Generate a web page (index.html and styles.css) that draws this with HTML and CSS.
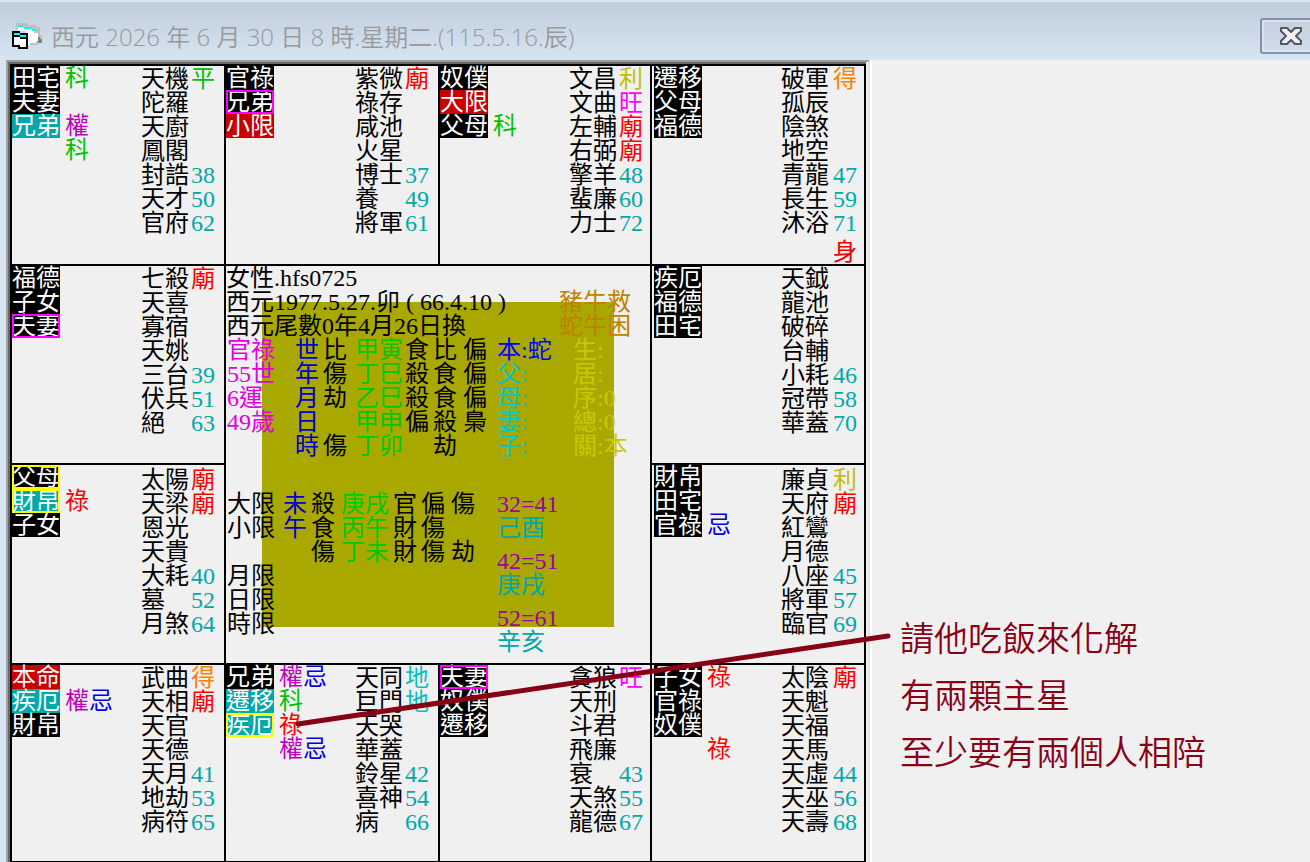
FILE: index.html
```html
<!DOCTYPE html>
<html lang="zh-Hant">
<head>
    <meta charset="UTF-8">
    <meta name="viewport" content="width=device-width, initial-scale=1.0">
    <title>西元 2026 年 6 月 30 日 8 時</title>
    <link rel="stylesheet" href="styles.css">
</head>
<body>
    <header class="titlebar">
        <svg class="app-icon" width="32" height="28" viewBox="0 0 32 28" shape-rendering="crispEdges">
            <path fill="#c0c0c0" d="M4 0h12v2h8v2h4v8h2v8h-4v2H14V6H4z"/>
            <path fill="#fff" d="M6 4h10v2h6v4h4v8h-2v2h-6v2h-4V8H6z"/>
            <path fill="#00ffff" d="M6 2h6v2H6zM12 4h8v2h-8zM20 6h4v2h-4z"/>
            <path fill="#808080" d="M26 14h2v2h2v4h-4z"/>
            <path fill="#000" d="M0 8h8v2h8v16H6v-2H0z"/>
            <path fill="#fff" d="M2 14h6v2h6v8H8v-2H2z"/>
            <path fill="#00ffff" d="M2 10h6v2H2zM8 12h6v2H8z"/>
        </svg>
        <h1 class="title">西元 2026 年 6 月 30 日 8 時.星期二.(115.5.16.辰)</h1>
        <button class="close" type="button" aria-label="關閉">
            <svg width="22" height="18" viewBox="0 0 22 18">
                <path d="M1 1h6l4 4 4-4h6v3l-5 5 5 5v3h-6l-4-4-4 4H1v-3l5-5-5-5z" fill="#f0f0f0" stroke="#525669" stroke-width="2" stroke-linejoin="round"/>
            </svg>
        </button>
    </header>

    <main class="client">
        <div class="frame">
            <div class="chart">
                <section class="cell">
                    <div class="tags">
                        <span class="tag">田宅</span>
                        <span class="tag">夫妻</span>
                        <span class="tag teal">兄弟</span>
                    </div>
                    <div class="marks"><span class="ke">科</span><br><br><span class="quan">權</span><br><span class="ke">科</span></div>
                    <div class="stars">天機<br>陀羅<br>天廚<br>鳳閣<br>封誥<br>天才<br>官府</div>
                    <div class="ages"><span class="ping">平</span><br><br><br><br>38<br>50<br>62</div>
                </section>
                <section class="cell">
                    <div class="tags">
                        <span class="tag">官祿</span>
                        <span class="tag pink-line">兄弟</span>
                        <span class="tag red">小限</span>
                    </div>
                    <div class="marks"></div>
                    <div class="stars">紫微<br>祿存<br>咸池<br>火星<br>博士<br>養<br>將軍</div>
                    <div class="ages"><span class="miao">廟</span><br><br><br><br>37<br>49<br>61</div>
                </section>
                <section class="cell third">
                    <div class="tags">
                        <span class="tag">奴僕</span>
                        <span class="tag red">大限</span>
                        <span class="tag">父母</span>
                    </div>
                    <div class="marks"><br><br><span class="ke">科</span></div>
                    <div class="stars">文昌<br>文曲<br>左輔<br>右弼<br>擎羊<br>蜚廉<br>力士</div>
                    <div class="ages"><span class="li">利</span><br><span class="wang">旺</span><br><span class="miao">廟</span><br><span class="miao">廟</span><br>48<br>60<br>72</div>
                </section>
                <section class="cell east">
                    <div class="tags">
                        <span class="tag">遷移</span>
                        <span class="tag">父母</span>
                        <span class="tag">福德</span>
                    </div>
                    <div class="marks"></div>
                    <div class="stars">破軍<br>孤辰<br>陰煞<br>地空<br>青龍<br>長生<br>沐浴</div>
                    <div class="ages"><span class="de">得</span><br><br><br><br>47<br>59<br>71<div class="body-mark">身</div></div>
                </section>

                <section class="cell">
                    <div class="tags">
                        <span class="tag">福德</span>
                        <span class="tag">子女</span>
                        <span class="tag pink-line">夫妻</span>
                    </div>
                    <div class="marks"></div>
                    <div class="stars">七殺<br>天喜<br>寡宿<br>天姚<br>三台<br>伏兵<br>絕</div>
                    <div class="ages"><span class="miao">廟</span><br><br><br><br>39<br>51<br>63</div>
                </section>

                <section class="center">
                    <div class="intro">
                        <div>女性.hfs0725<br>西元1977.5.27.卯 ( 66.4.10 )<br>西元尾數0年4月26日換</div>
                        <div class="verdict">豬牛救<br>蛇牛困</div>
                    </div>
                    <table class="pillars">
                        <colgroup>
                            <col class="w-luck"><col class="w-one"><col class="w-two"><col class="w-pair"><col class="w-one"><col class="w-god"><col class="w-gap"><col class="w-kin"><col>
                        </colgroup>
                        <tr><td class="luck">官祿</td><td class="blue">世</td><td>比</td><td class="green">甲寅</td><td>食</td><td>比</td><td>偏</td><td class="self">本:蛇</td><td class="info">生:</td></tr>
                        <tr><td class="luck">55世</td><td class="blue">年</td><td>傷</td><td class="green">丁巳</td><td>殺</td><td>食</td><td>偏</td><td class="kin">父:</td><td class="info">居:</td></tr>
                        <tr><td class="luck">6運</td><td class="blue">月</td><td>劫</td><td class="green">乙巳</td><td>殺</td><td>食</td><td>偏</td><td class="kin">母:</td><td class="info">序:0</td></tr>
                        <tr><td class="luck">49歲</td><td class="blue">日</td><td></td><td class="green">甲申</td><td>偏</td><td>殺</td><td>梟</td><td class="kin">妻:</td><td class="info">總:0</td></tr>
                        <tr><td></td><td class="blue">時</td><td>傷</td><td class="green">丁卯</td><td></td><td>劫</td><td></td><td class="kin">子:</td><td class="info">關:本</td></tr>
                    </table>
                    <div class="limits">
                        <table class="limit-table">
                            <colgroup>
                                <col class="w-limit"><col class="w-one"><col class="w-god"><col class="w-pillar"><col class="w-one"><col class="w-god"><col>
                            </colgroup>
                            <tr><td>大限</td><td class="blue">未</td><td>殺</td><td class="green">庚戌</td><td>官</td><td>偏</td><td>傷</td></tr>
                            <tr><td>小限</td><td class="blue">午</td><td>食</td><td class="green">丙午</td><td>財</td><td>傷</td><td></td></tr>
                            <tr><td></td><td></td><td>傷</td><td class="green">丁未</td><td>財</td><td>傷</td><td>劫</td></tr>
                            <tr><td>月限</td><td colspan="6"></td></tr>
                            <tr><td>日限</td><td colspan="6"></td></tr>
                            <tr><td>時限</td><td colspan="6"></td></tr>
                        </table>
                        <div class="decades">
                            <div><span class="years">32=41</span><br>己酉</div>
                            <div><span class="years">42=51</span><br>庚戌</div>
                            <div><span class="years">52=61</span><br>辛亥</div>
                        </div>
                    </div>
                </section>

                <section class="cell east">
                    <div class="tags">
                        <span class="tag">疾厄</span>
                        <span class="tag">福德</span>
                        <span class="tag">田宅</span>
                    </div>
                    <div class="marks"></div>
                    <div class="stars">天鉞<br>龍池<br>破碎<br>台輔<br>小耗<br>冠帶<br>華蓋</div>
                    <div class="ages"><br><br><br><br>46<br>58<br>70</div>
                </section>

                <section class="cell low">
                    <div class="tags">
                        <span class="tag yellow-line">父母</span>
                        <span class="tag teal yellow-line">財帛</span>
                        <span class="tag">子女</span>
                    </div>
                    <div class="marks"><br><span class="lu">祿</span></div>
                    <div class="stars">太陽<br>天梁<br>恩光<br>天貴<br>大耗<br>墓<br>月煞</div>
                    <div class="ages"><span class="miao">廟</span><br><span class="miao">廟</span><br><br><br>40<br>52<br>64</div>
                </section>
                <section class="cell east low">
                    <div class="tags">
                        <span class="tag">財帛</span>
                        <span class="tag">田宅</span>
                        <span class="tag">官祿</span>
                    </div>
                    <div class="marks"><br><br><span class="ji">忌</span></div>
                    <div class="stars">廉貞<br>天府<br>紅鸞<br>月德<br>八座<br>將軍<br>臨官</div>
                    <div class="ages"><span class="li">利</span><br><span class="miao">廟</span><br><br><br>45<br>57<br>69</div>
                </section>

                <section class="cell">
                    <div class="tags">
                        <span class="tag red">本命</span>
                        <span class="tag teal">疾厄</span>
                        <span class="tag">財帛</span>
                    </div>
                    <div class="marks"><br><span class="quan">權</span><span class="ji">忌</span></div>
                    <div class="stars">武曲<br>天相<br>天官<br>天德<br>天月<br>地劫<br>病符</div>
                    <div class="ages"><span class="de">得</span><br><span class="miao">廟</span><br><br><br>41<br>53<br>65</div>
                </section>
                <section class="cell">
                    <div class="tags">
                        <span class="tag">兄弟</span>
                        <span class="tag teal">遷移</span>
                        <span class="tag teal yellow-line">疾厄</span>
                    </div>
                    <div class="marks"><span class="quan">權</span><span class="ji">忌</span><br><span class="ke">科</span><br><span class="lu">祿</span><br><span class="quan">權</span><span class="ji">忌</span></div>
                    <div class="stars">天同<br>巨門<br>天哭<br>華蓋<br>鈴星<br>喜神<br>病</div>
                    <div class="ages"><span class="di">地</span><br><span class="di">地</span><br><br><br>42<br>54<br>66</div>
                </section>
                <section class="cell third">
                    <div class="tags">
                        <span class="tag pink-line">夫妻</span>
                        <span class="tag">奴僕</span>
                        <span class="tag">遷移</span>
                    </div>
                    <div class="marks"></div>
                    <div class="stars">貪狼<br>天刑<br>斗君<br>飛廉<br>衰<br>天煞<br>龍德</div>
                    <div class="ages"><span class="wang">旺</span><br><br><br><br>43<br>55<br>67</div>
                </section>
                <section class="cell east">
                    <div class="tags">
                        <span class="tag">子女</span>
                        <span class="tag">官祿</span>
                        <span class="tag">奴僕</span>
                    </div>
                    <div class="marks"><span class="lu">祿</span><br><br><br><span class="lu">祿</span></div>
                    <div class="stars">太陰<br>天魁<br>天福<br>天馬<br>天虛<br>天巫<br>天壽</div>
                    <div class="ages"><span class="miao">廟</span><br><br><br><br>44<br>56<br>68</div>
                </section>
            </div>
        </div>

        <aside class="notes">
            <p>請他吃飯來化解</p>
            <p>有兩顆主星</p>
            <p>至少要有兩個人相陪</p>
        </aside>

        <!-- pointer from the mark to the note -->
        <svg class="pointer" width="600" height="100" viewBox="0 0 600 100">
            <path d="M6 94L596 6" stroke="#880015" stroke-width="5" stroke-linecap="round"/>
        </svg>
    </main>
</body>
</html>
```
FILE: styles.css
```css
body {
    margin: 0;
    height: 100vh;
    display: flex;
    flex-direction: column;
    overflow: hidden;
    background: #f0f0f0;
    font-family: "Liberation Serif", "Noto Sans CJK TC", serif;
    font-size: 24px;
    line-height: 24px;
    color: #000;
}

/* title bar */
.titlebar {
    display: flex;
    align-items: center;
    flex: none;
    box-sizing: border-box;
    height: 60px;
    padding: 12px 0 0 12px;
    border-top: 2px solid #dce5ee;
    background: linear-gradient(#bfccda, #d7e4f2);
}
.app-icon {
    flex: none;
}
.title {
    flex: 1;
    margin: 0 0 0 7px;
    font: 24px/32px "Open Sans", "Noto Sans CJK TC", sans-serif;
    font-weight: 350;
    color: #999;
    white-space: nowrap;
}
.close {
    display: flex;
    align-items: center;
    justify-content: center;
    width: 62px;
    height: 36px;
    margin: 0 -12px 2px 0;
    padding: 0;
    border: 2px solid #8490ae;
    border-radius: 3px;
    background: linear-gradient(#c3d0de, #d0dcea);
    box-shadow: inset 0 0 0 2px #dae4f0;
}

/* client area */
.client {
    position: relative;
    display: flex;
    flex: 1;
    min-height: 0;
}
.frame {
    flex: none;
    align-self: flex-start;
    margin-left: 6px;
    padding-right: 2px;
    border: 2px solid #a0a0a0;
    border-right-color: #e3e3e3;
    box-shadow: -6px 0 0 #d7e4f2, 2px 0 0 #fff;
}
.chart {
    display: grid;
    grid-template-columns: 212px 212px 210px 212px;
    grid-template-rows: 198px 197px 198px 196px;
    gap: 2px;
    padding: 2px;
    background: #000;
    border: 2px solid #696969;
    border-right: 0;
    border-bottom: 0;
}

/* palace cells */
.cell {
    display: flex;
    padding-right: 9px;
    background: #f0f0f0;
}
.third {
    padding-right: 7px;
}
.east {
    padding: 0 7px 0 2px;
}
.tags {
    width: 48px;
}
.tag {
    display: block;
    height: 24px;
    background: #000;
    color: #fff;
}
.teal {
    background: #00a8a8;
}
.red {
    background: #c80000;
}
.pink-line {
    outline: 2px solid #f0f;
    outline-offset: -2px;
}
.yellow-line {
    outline: 2px solid #ff0;
    outline-offset: -2px;
}
.marks {
    flex: 1;
    margin-left: 5px;
}
.stars,
.ages {
    padding-top: 1px;
}
.low .stars,
.low .ages {
    padding-top: 3px;
}
.stars {
    width: 48px;
}
.ages {
    width: 24px;
    margin-left: 2px;
    color: #00a8a8;
}
.east .ages {
    margin-left: 4px;
}
.body-mark {
    margin-top: 5px;
    color: #f00000;
}

/* marks and brightness */
.ke,
.ping {
    color: #00c000;
}
.quan {
    color: #c000c0;
}
.lu,
.miao {
    color: #f00;
}
.ji {
    color: #0000e0;
}
.li {
    color: #c0c000;
}
.wang {
    color: #f0f;
}
.de {
    color: #ff8000;
}
.di {
    color: #00c0c0;
}

/* center panel */
.center {
    position: relative;
    z-index: 0;
    grid-area: 2 / 2 / 4 / 4;
    background: #f0f0f0;
}
.center::before {
    content: "";
    position: absolute;
    z-index: -1;
    inset: 36px;
    background: #a8a800;
}
.intro {
    display: flex;
    justify-content: space-between;
    padding-right: 19px;
    white-space: nowrap;
}
.verdict {
    padding-top: 24px;
    color: #c08000;
}
.pillars,
.limit-table {
    table-layout: fixed;
    border-collapse: collapse;
    white-space: nowrap;
}
.pillars {
    width: 423px;
    margin-left: 1px;
}
.limit-table {
    width: 270px;
}
td {
    height: 24px;
    padding: 0;
}
.w-luck {
    width: 68px;
}
.w-one {
    width: 28px;
}
.w-two {
    width: 32px;
}
.w-pair {
    width: 50px;
}
.w-god {
    width: 30px;
}
.w-gap {
    width: 34px;
}
.w-kin {
    width: 76px;
}
.w-limit {
    width: 56px;
}
.w-pillar {
    width: 52px;
}
.luck {
    color: #e000e0;
}
.blue {
    color: #0000c8;
}
.green {
    color: #00c800;
}
.self {
    color: #00f;
}
.kin {
    color: #00c8c8;
}
.info {
    color: #c8c800;
}
.limits {
    display: flex;
    align-items: flex-start;
    margin: 34px 0 0 1px;
}
.decades {
    display: flex;
    flex-direction: column;
    gap: 9px;
    color: #00a8a8;
}
.years {
    color: #a000a0;
}

/* notes beside the chart */
.notes {
    padding: 548px 0 0 30px;
    font: 34px/57px "Noto Sans CJK TC", sans-serif;
    font-weight: 350;
    color: #880015;
    white-space: nowrap;
}
.notes p {
    margin: 0;
}
.pointer {
    position: absolute;
    left: 292px;
    top: 570px;
}
```
